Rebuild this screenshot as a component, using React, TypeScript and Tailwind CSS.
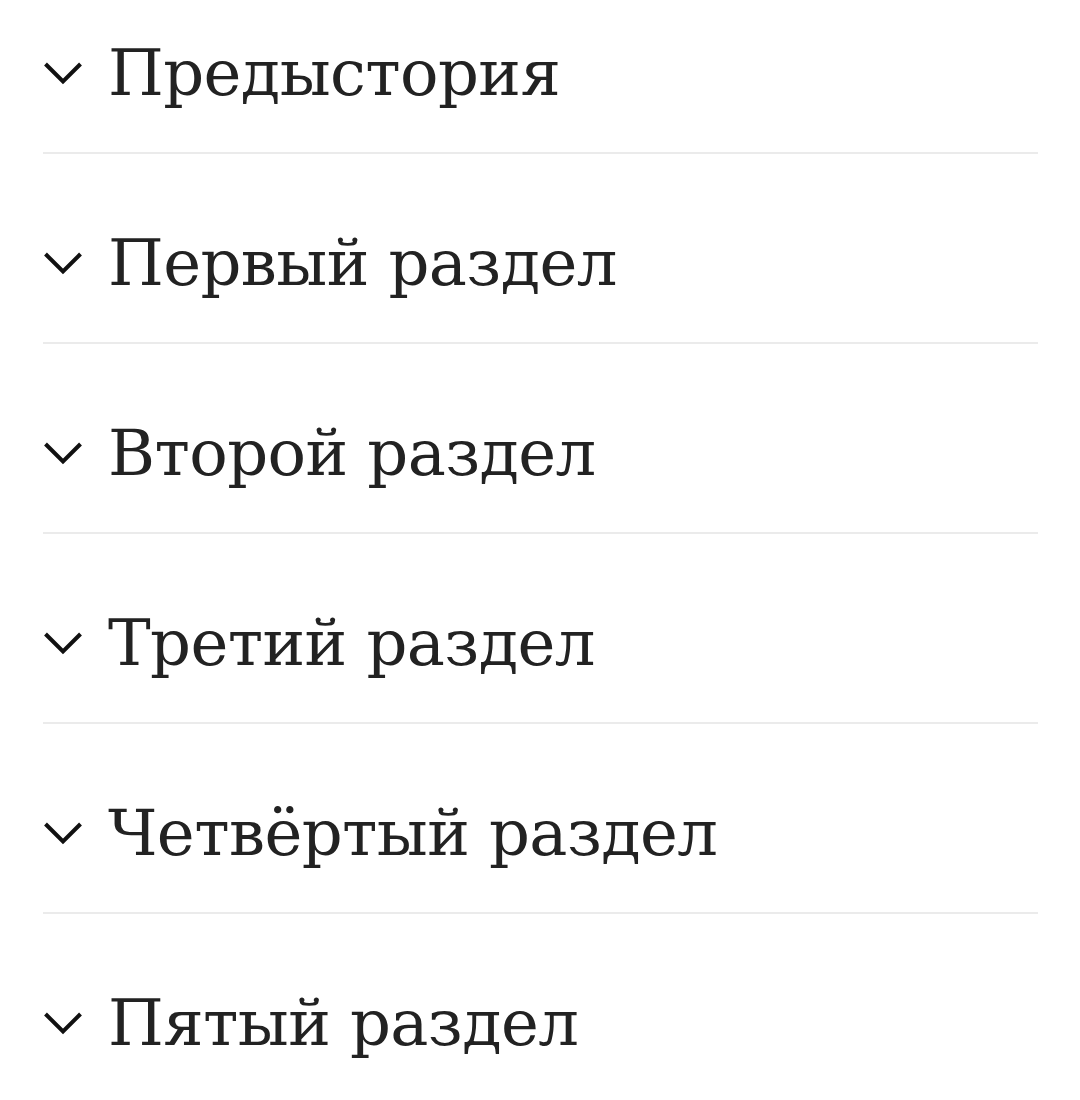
import React from "react";

const items = [
  "Предыстория",
  "Первый раздел",
  "Второй раздел",
  "Третий раздел",
  "Четвёртый раздел",
  "Пятый раздел",
];

function Chevron() {
  return (
    <svg width="40" height="24" viewBox="0 0 40 24" className="shrink-0">
      <polyline
        points="2.5,3 20,20.5 37.5,3"
        fill="none"
        stroke="#111111"
        strokeWidth="4"
        strokeLinecap="butt"
        strokeLinejoin="miter"
      />
    </svg>
  );
}

export default function App() {
  return (
    <div className="w-[1080px] h-[1100px] overflow-hidden bg-white">
      <div className="pl-[43px] pr-[42px]">
        {items.map((t, i) => (
          <div
            key={t}
            className={
              "flex items-center gap-[25px] pb-[39px] " +
              (i === 0 ? "pt-[33px] " : "pt-[69px] ") +
              (i < items.length - 1 ? "border-b-2 border-[#ebebeb]" : "")
            }
          >
            <Chevron />
            <span
              className="text-[64px] leading-[80px] tracking-[-0.6px] text-[#222222] whitespace-nowrap"
              style={{ fontFamily: '"DejaVu Serif", serif' }}
            >
              {t}
            </span>
          </div>
        ))}
      </div>
    </div>
  );
}
